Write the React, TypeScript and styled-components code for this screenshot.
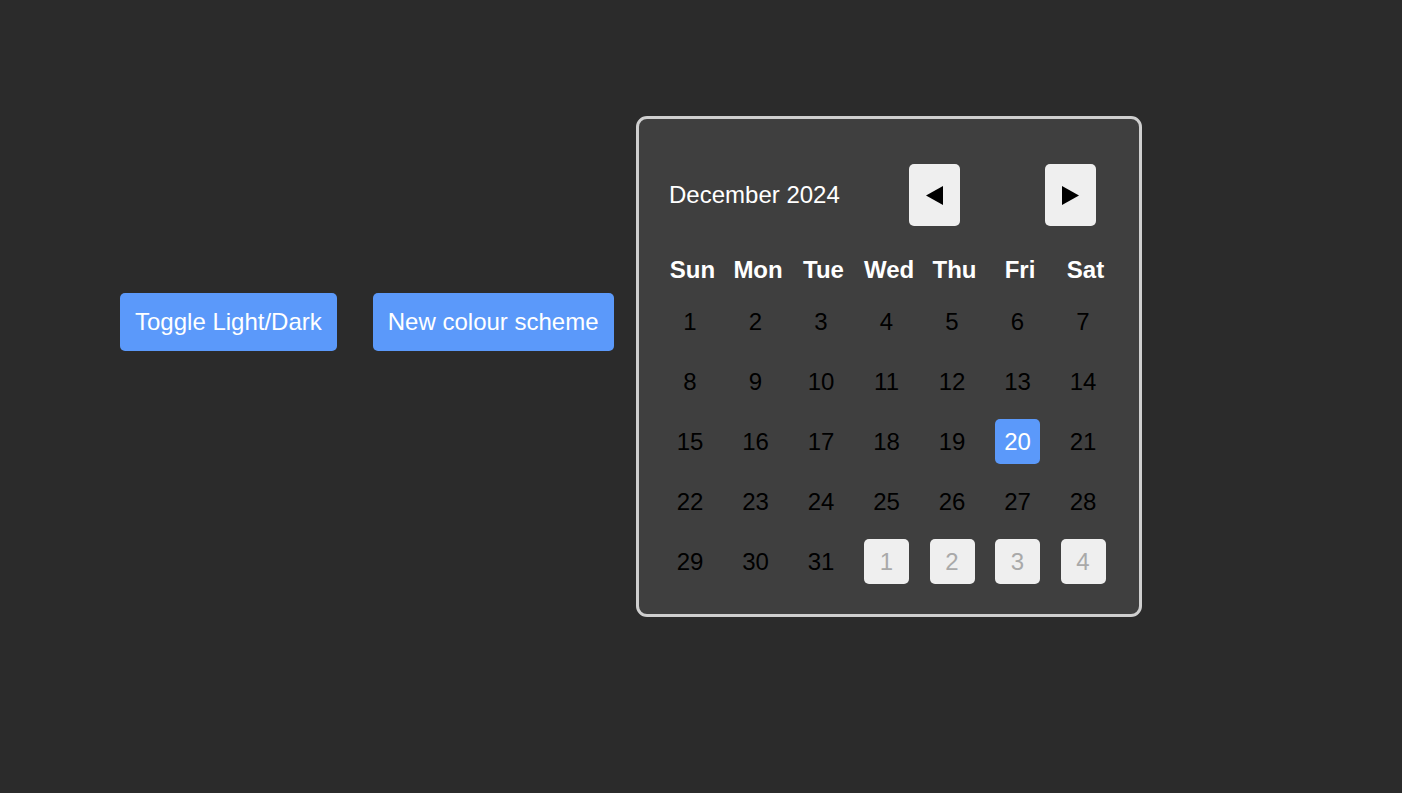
import React from "react";
import styled, { createGlobalStyle } from "styled-components";

const GlobalStyle = createGlobalStyle`
  html, body {
    margin: 0;
    padding: 0;
    background: #2b2b2b;
    font-family: "Liberation Sans", Arial, sans-serif;
  }
`;

const Page = styled.div`
  display: flex;
  align-items: flex-start;
  padding: 116px 0 0 120px;
  min-height: 793px;
  box-sizing: border-box;
`;

const Controls = styled.div`
  display: flex;
  gap: 36px;
  margin-top: 177px;
  margin-right: 22px;
`;

const ActionButton = styled.button`
  font-family: "Liberation Sans", Arial, sans-serif;
  font-size: 24px;
  line-height: 28px;
  color: #ffffff;
  background: #5b99fa;
  border: none;
  border-radius: 5px;
  padding: 15px 15px;
  cursor: pointer;
`;

const Card = styled.div`
  width: 506px;
  box-sizing: border-box;
  background: #3f3f3f;
  border: 3px solid #cfcfcf;
  border-radius: 11px;
  padding: 45px 28px 30px 29px;
`;

const Header = styled.div`
  display: flex;
  align-items: center;
`;

const Title = styled.div`
  color: #ffffff;
  font-size: 24px;
  width: 170px;
  padding-left: 1.5px;
  white-space: nowrap;
`;

const NavButton = styled.button<{ $ml: number }>`
  width: 51px;
  height: 62px;
  flex: none;
  margin-left: ${(p) => p.$ml}px;
  background: #efefef;
  border: none;
  border-radius: 5px;
  display: flex;
  align-items: center;
  justify-content: center;
  padding: 0;
  cursor: pointer;
`;

const Grid = styled.div`
  display: grid;
  grid-template-columns: repeat(7, 50px);
  column-gap: 15.5px;
  row-gap: 15px;
  margin-top: 29px;
`;

const DayName = styled.div`
  color: #ffffff;
  font-weight: bold;
  font-size: 24px;
  height: 29px;
  line-height: 29px;
  text-align: center;
  white-space: nowrap;
`;

type Kind = "normal" | "today" | "other";

const DayCell = styled.div<{ $kind: Kind }>`
  width: 45px;
  height: 45px;
  border-radius: 5px;
  display: flex;
  align-items: center;
  justify-content: center;
  font-size: 24px;
  background: ${(p) =>
    p.$kind === "today" ? "#5b99fa" : p.$kind === "other" ? "#efefef" : "transparent"};
  color: ${(p) =>
    p.$kind === "today" ? "#ffffff" : p.$kind === "other" ? "#a9a9a9" : "#000000"};
`;

const days = ["Sun", "Mon", "Tue", "Wed", "Thu", "Fri", "Sat"];

const cells: { n: number; kind: Kind }[] = [];
for (let i = 1; i <= 31; i++) cells.push({ n: i, kind: i === 20 ? "today" : "normal" });
for (let i = 1; i <= 4; i++) cells.push({ n: i, kind: "other" });

export default function App() {
  return (
    <>
      <GlobalStyle />
      <Page>
        <Controls>
          <ActionButton>Toggle Light/Dark</ActionButton>
          <ActionButton>New colour scheme</ActionButton>
        </Controls>
        <Card>
          <Header>
            <Title>December 2024</Title>
            <NavButton $ml={69.5}>
              <svg width="17" height="19" viewBox="0 0 17 19">
                <polygon points="17,0 17,19 0,9.5" fill="#000" />
              </svg>
            </NavButton>
            <NavButton $ml={85}>
              <svg width="17" height="19" viewBox="0 0 17 19">
                <polygon points="0,0 0,19 17,9.5" fill="#000" />
              </svg>
            </NavButton>
          </Header>
          <Grid>
            {days.map((d) => (
              <DayName key={d}>{d}</DayName>
            ))}
            {cells.map((c, i) => (
              <DayCell key={i} $kind={c.kind}>
                {c.n}
              </DayCell>
            ))}
          </Grid>
        </Card>
      </Page>
    </>
  );
}
